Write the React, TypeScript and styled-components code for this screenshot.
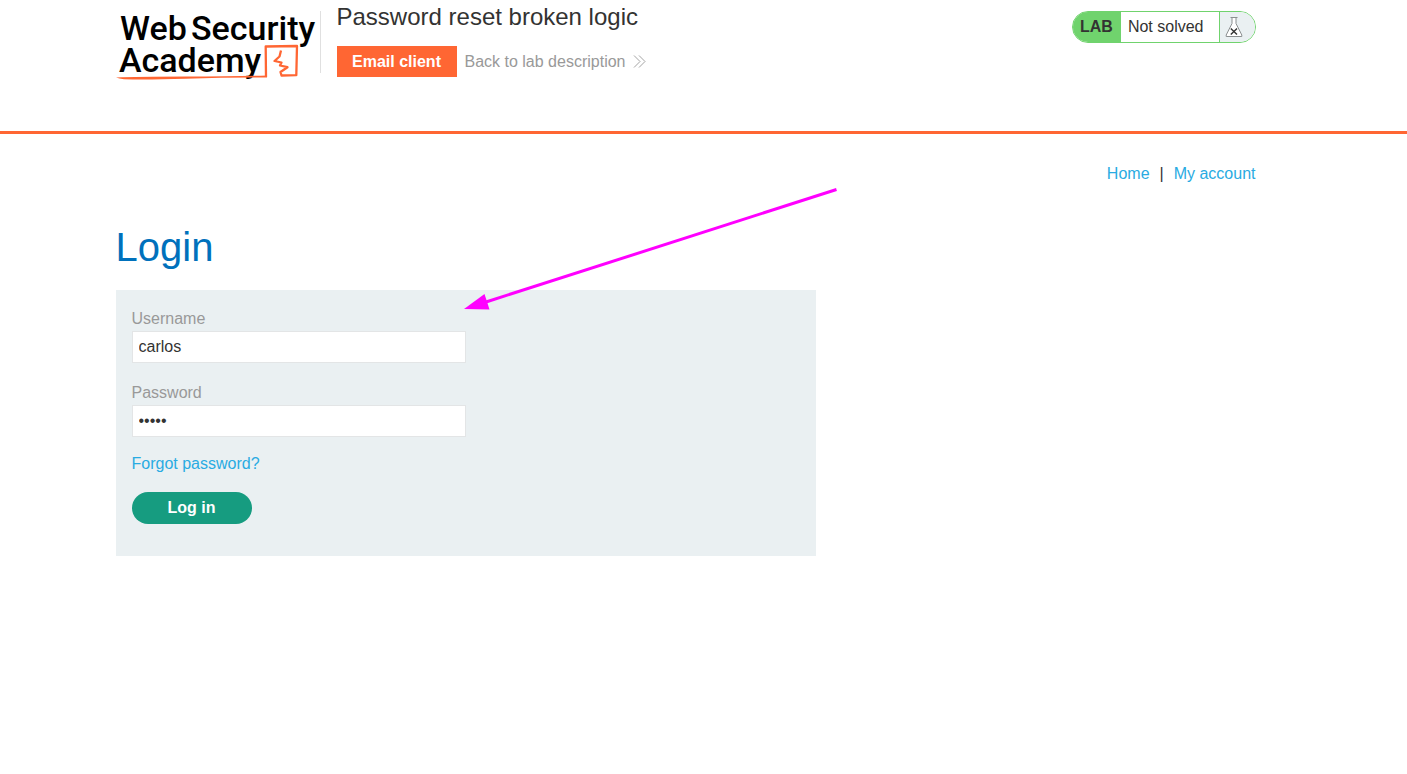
import React from "react";
import styled, { createGlobalStyle } from "styled-components";

const GlobalStyle = createGlobalStyle`
  *, *::before, *::after { box-sizing: border-box; }
  body {
    margin: 0;
    background: #fff;
    color: #333332;
    font-family: "Liberation Sans", Arial, sans-serif;
    font-size: 16px;
    line-height: 24px;
  }
  a { text-decoration: none; }
`;

const Band = styled.div`
  padding-right: 36px;
`;

const Container = styled.div`
  position: relative;
  max-width: 1140px;
  margin: 0 auto;
`;

const Header = styled.header`
  border-bottom: 3px solid #ff6633;
`;

const HeaderRow = styled(Container)`
  display: flex;
  align-items: flex-start;
  min-height: 131px;
`;

const LogoLink = styled.a`
  display: block;
  flex: none;
  padding-top: 8px;
  svg { display: block; }
`;

const TitleBlock = styled.div`
  display: flex;
  flex-direction: column;
  gap: 14px;
  height: 62px;
  margin-top: 11px;
  padding-left: 16px;
  border-left: 1px solid #e0e0e0;
`;

const LabTitle = styled.h2`
  margin: -10px 0 0;
  font-size: 24px;
  font-weight: 400;
  line-height: 31px;
`;

const Actions = styled.div`
  display: flex;
  align-items: center;
  gap: 8px;
`;

const EmailButton = styled.button`
  width: 120px;
  height: 31px;
  padding: 0;
  border: 0;
  background: #ff6633;
  color: #fff;
  font: inherit;
  font-weight: 700;
`;

const BackLink = styled.a`
  display: flex;
  align-items: center;
  gap: 8px;
  color: #999;
`;

const Status = styled.div`
  display: flex;
  height: 32px;
  margin: 11px 0 0 auto;
  border: 1px solid #70d36d;
  border-radius: 16px;
  overflow: hidden;
  line-height: 30px;
`;

const StatusTag = styled.span`
  padding: 0 8px 0 7px;
  background: #70d36d;
  font-weight: 700;
`;

const StatusText = styled.span`
  padding: 0 15px 0 7px;
`;

const StatusIcon = styled.span`
  display: flex;
  align-items: center;
  width: 36px;
  padding-left: 5px;
  border-left: 1px solid #70d36d;
  background: #eaf0f2;
`;

const Nav = styled.nav`
  display: flex;
  justify-content: flex-end;
  gap: 10px;
  padding-top: 28px;
`;

const TextLink = styled.a`
  color: #29abe2;
`;

const Heading = styled.h1`
  margin: 36px 0 18px;
  color: #0071bc;
  font-size: 40px;
  font-weight: 400;
  line-height: 50px;
`;

const LoginForm = styled.form`
  display: flex;
  flex-direction: column;
  align-items: flex-start;
  max-width: 700px;
  padding: 16px 16px 32px;
  background: #eaf0f2;
`;

const Field = styled.div`
  display: flex;
  flex-direction: column;
  width: 100%;
  max-width: 334px;
  & + & { margin-top: 17px; }
`;

const Label = styled.label`
  color: #999;
  line-height: 25px;
`;

const Input = styled.input`
  width: 100%;
  height: 32px;
  padding: 0 6px;
  border: 1px solid #e3e5e6;
  outline: 0;
  background: #fff;
  color: #333332;
  font: inherit;
`;

const ForgotLink = styled(TextLink)`
  margin: 14px 0 16px;
  line-height: 25px;
`;

const LoginButton = styled.button`
  width: 120px;
  height: 32px;
  padding: 0;
  border: 0;
  border-radius: 16px;
  background: #169c80;
  color: #fff;
  font: inherit;
  font-weight: 700;
`;

const Pointer = styled.svg`
  position: absolute;
  top: 50px;
  left: 346px;
  pointer-events: none;
`;

const Logo = () => (
  <svg width="204" height="74" viewBox="0 0 204 74" role="img" aria-label="Web Security Academy">
    <g fill="#000" fontFamily="Roboto, sans-serif" fontWeight="500" fontSize="34">
      <text x="4" y="32">Web</text>
      <text x="75" y="32">Security</text>
      <text x="3" y="64">Academy</text>
    </g>
    <path d="M0 69.500Q20 68.500 70 68.500T151 67.500V69.500Q110 69.500 70 70.700T8 71.200Q3 70.500 0 69.500Z" fill="#ff6633" />
    <path
      d="M150 69L149.700 38.500L181 38L180.300 67.200L165.500 67.500L164.500 64L171.500 59.200L164 57.500L165.500 54.500L158.500 53L163.500 48.500L165 42.500"
      fill="none"
      stroke="#ff6633"
      strokeWidth="2.300"
      strokeLinejoin="round"
    />
  </svg>
);

const Flask = () => (
  <svg width="18" height="22" viewBox="0 0 18 22" aria-hidden="true">
    <path d="M5.500 1.500H12.500M7 1.500V7.500L1.200 19V20.500H16.800V19L11 7.500V1.500" fill="#fff" stroke="#8b8f90" />
    <path d="M5.800 12.500L12 18.500M12 12.500L5.800 18.500" stroke="#333332" strokeWidth="1.400" />
  </svg>
);

const Chevrons = () => (
  <svg width="13" height="14" viewBox="0 0 13 14" fill="none" stroke="#999" strokeWidth="0.900" aria-hidden="true">
    <path d="M1 .5L7 6.500L1 12.500M6 .5L12 6.500L6 12.500" />
  </svg>
);

export default function App() {
  return (
    <>
      <GlobalStyle />
      <Header>
        <Band>
          <HeaderRow>
            <LogoLink href="#"><Logo /></LogoLink>
            <TitleBlock>
              <LabTitle>Password reset broken logic</LabTitle>
              <Actions>
                <EmailButton type="button">Email client</EmailButton>
                <BackLink href="#">Back to lab description <Chevrons /></BackLink>
              </Actions>
            </TitleBlock>
            <Status>
              <StatusTag>LAB</StatusTag>
              <StatusText>Not solved</StatusText>
              <StatusIcon><Flask /></StatusIcon>
            </Status>
          </HeaderRow>
        </Band>
      </Header>
      <Band as="main">
        <Container>
          <Nav>
            <TextLink href="#">Home</TextLink>
            <span>|</span>
            <TextLink href="#">My account</TextLink>
          </Nav>
          <Heading>Login</Heading>
          <LoginForm onSubmit={(e) => e.preventDefault()}>
            <Field>
              <Label htmlFor="username">Username</Label>
              <Input id="username" type="text" defaultValue="carlos" />
            </Field>
            <Field>
              <Label htmlFor="password">Password</Label>
              <Input id="password" type="password" defaultValue="peter" />
            </Field>
            <ForgotLink href="#">Forgot password?</ForgotLink>
            <LoginButton type="submit">Log in</LoginButton>
          </LoginForm>
          <Pointer width="378" height="130" viewBox="0 0 378 130" aria-hidden="true">
            <path d="M374.500 5.500L24 118" stroke="#ff00ff" strokeWidth="3" />
            <path d="M2 125L22.500 110L27.500 125.500Z" fill="#ff00ff" />
          </Pointer>
        </Container>
      </Band>
    </>
  );
}
